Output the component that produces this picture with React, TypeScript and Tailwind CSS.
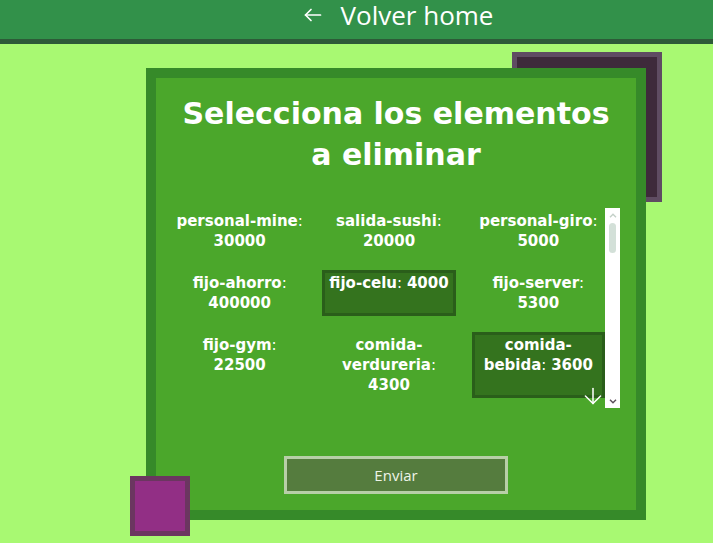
import React from "react";
import { ArrowDown } from "lucide-react";

const items: { name: string; value: number; selected?: boolean }[] = [
  { name: "personal-mine", value: 30000 },
  { name: "salida-sushi", value: 20000 },
  { name: "personal-giro", value: 5000 },
  { name: "fijo-ahorro", value: 400000 },
  { name: "fijo-celu", value: 4000, selected: true },
  { name: "fijo-server", value: 5300 },
  { name: "fijo-gym", value: 22500 },
  { name: "comida-verdureria", value: 4300 },
  { name: "comida-bebida", value: 3600, selected: true },
];

const dejavu = { fontFamily: "'DejaVu Sans', 'Liberation Sans', sans-serif" };

export default function App() {
  return (
    <div
      className="relative min-h-[543px] overflow-hidden bg-[#a8f972]"
      style={{ fontFamily: "'Open Sans', 'Liberation Sans', sans-serif" }}
    >
      <header className="flex h-[44px] items-center justify-center border-b-[5px] border-[#2d5b38] bg-[#32914a] pb-[10px] pl-[84px] text-white">
        <div className="flex items-center gap-[19px]">
          <svg width="18" height="14" viewBox="0 0 18 14" fill="none" stroke="white" strokeWidth="1.7" strokeLinecap="round" strokeLinejoin="round">
            <path d="M1.5 7 H16.5" />
            <path d="M7 1.5 L1.5 7 L7 12.5" />
          </svg>
          <span className="text-[26px] font-normal leading-[28px]">Volver home</span>
        </div>
      </header>

      <main className="relative pl-[146px] pt-[24px]">
        <div className="absolute left-[512px] top-[8px] h-[150px] w-[150px] border-[5px] border-[#5f4c62] bg-[#3e2a3b]" />

        <div className="relative z-10 flex h-[452px] w-[500px] flex-col border-[10px] border-[#368a29] bg-[#4ba72b] px-4 pt-[15px]">
          <h1 className="text-center text-[30px] font-bold leading-[41px] text-white" style={dejavu}>
            Selecciona los elementos
            <br />a eliminar
          </h1>

          <div className="relative mt-[33px] flex h-[200px]">
            <div className="h-full w-[433px] overflow-hidden pl-px">
              <div className="grid w-[432px] grid-cols-3 gap-4">
                {items.map((it) => (
                  <div
                    key={it.name}
                    className={
                      "border-[3px] text-center text-[15px] font-bold leading-[20px] text-white " +
                      (it.selected ? "border-[#2a5e1a] bg-[#34731e]" : "border-transparent")
                    }
                    style={dejavu}
                  >
                    {it.name}
                    <span className="font-normal">: </span>
                    {it.value}
                  </div>
                ))}
              </div>
            </div>
            <div className="flex h-full w-[15px] flex-col items-center bg-white pt-[4px] pb-[4px]">
              <svg width="8" height="5" viewBox="0 0 8 5" className="mt-[1px]">
                <path d="M1 4.2 L4 1.2 L7 4.2" fill="none" stroke="#c3d0c8" strokeWidth="1.4" />
              </svg>
              <div className="mt-[5px] h-[30px] w-[7px] rounded-full bg-[#d3e0d8]" />
              <div className="flex-1" />
              <svg width="8" height="5" viewBox="0 0 8 5">
                <path d="M1 0.8 L4 3.8 L7 0.8" fill="none" stroke="#5a4d5a" strokeWidth="1.4" />
              </svg>
            </div>
            <ArrowDown
              size={26}
              strokeWidth={1.4}
              className="absolute bottom-[-1px] right-[14px] text-white"
            />
          </div>

          <button className="mx-auto mt-[48px] h-[38px] w-[224px] border-[3px] border-[#b8cfa8] bg-[#557c3e] text-[15px] text-[#eef4e8]">
            Enviar
          </button>
        </div>

        <div className="absolute left-[130px] top-[432px] z-20 h-[60px] w-[60px] border-[5px] border-[#6b3660] bg-[#922f85]" />
      </main>
    </div>
  );
}
